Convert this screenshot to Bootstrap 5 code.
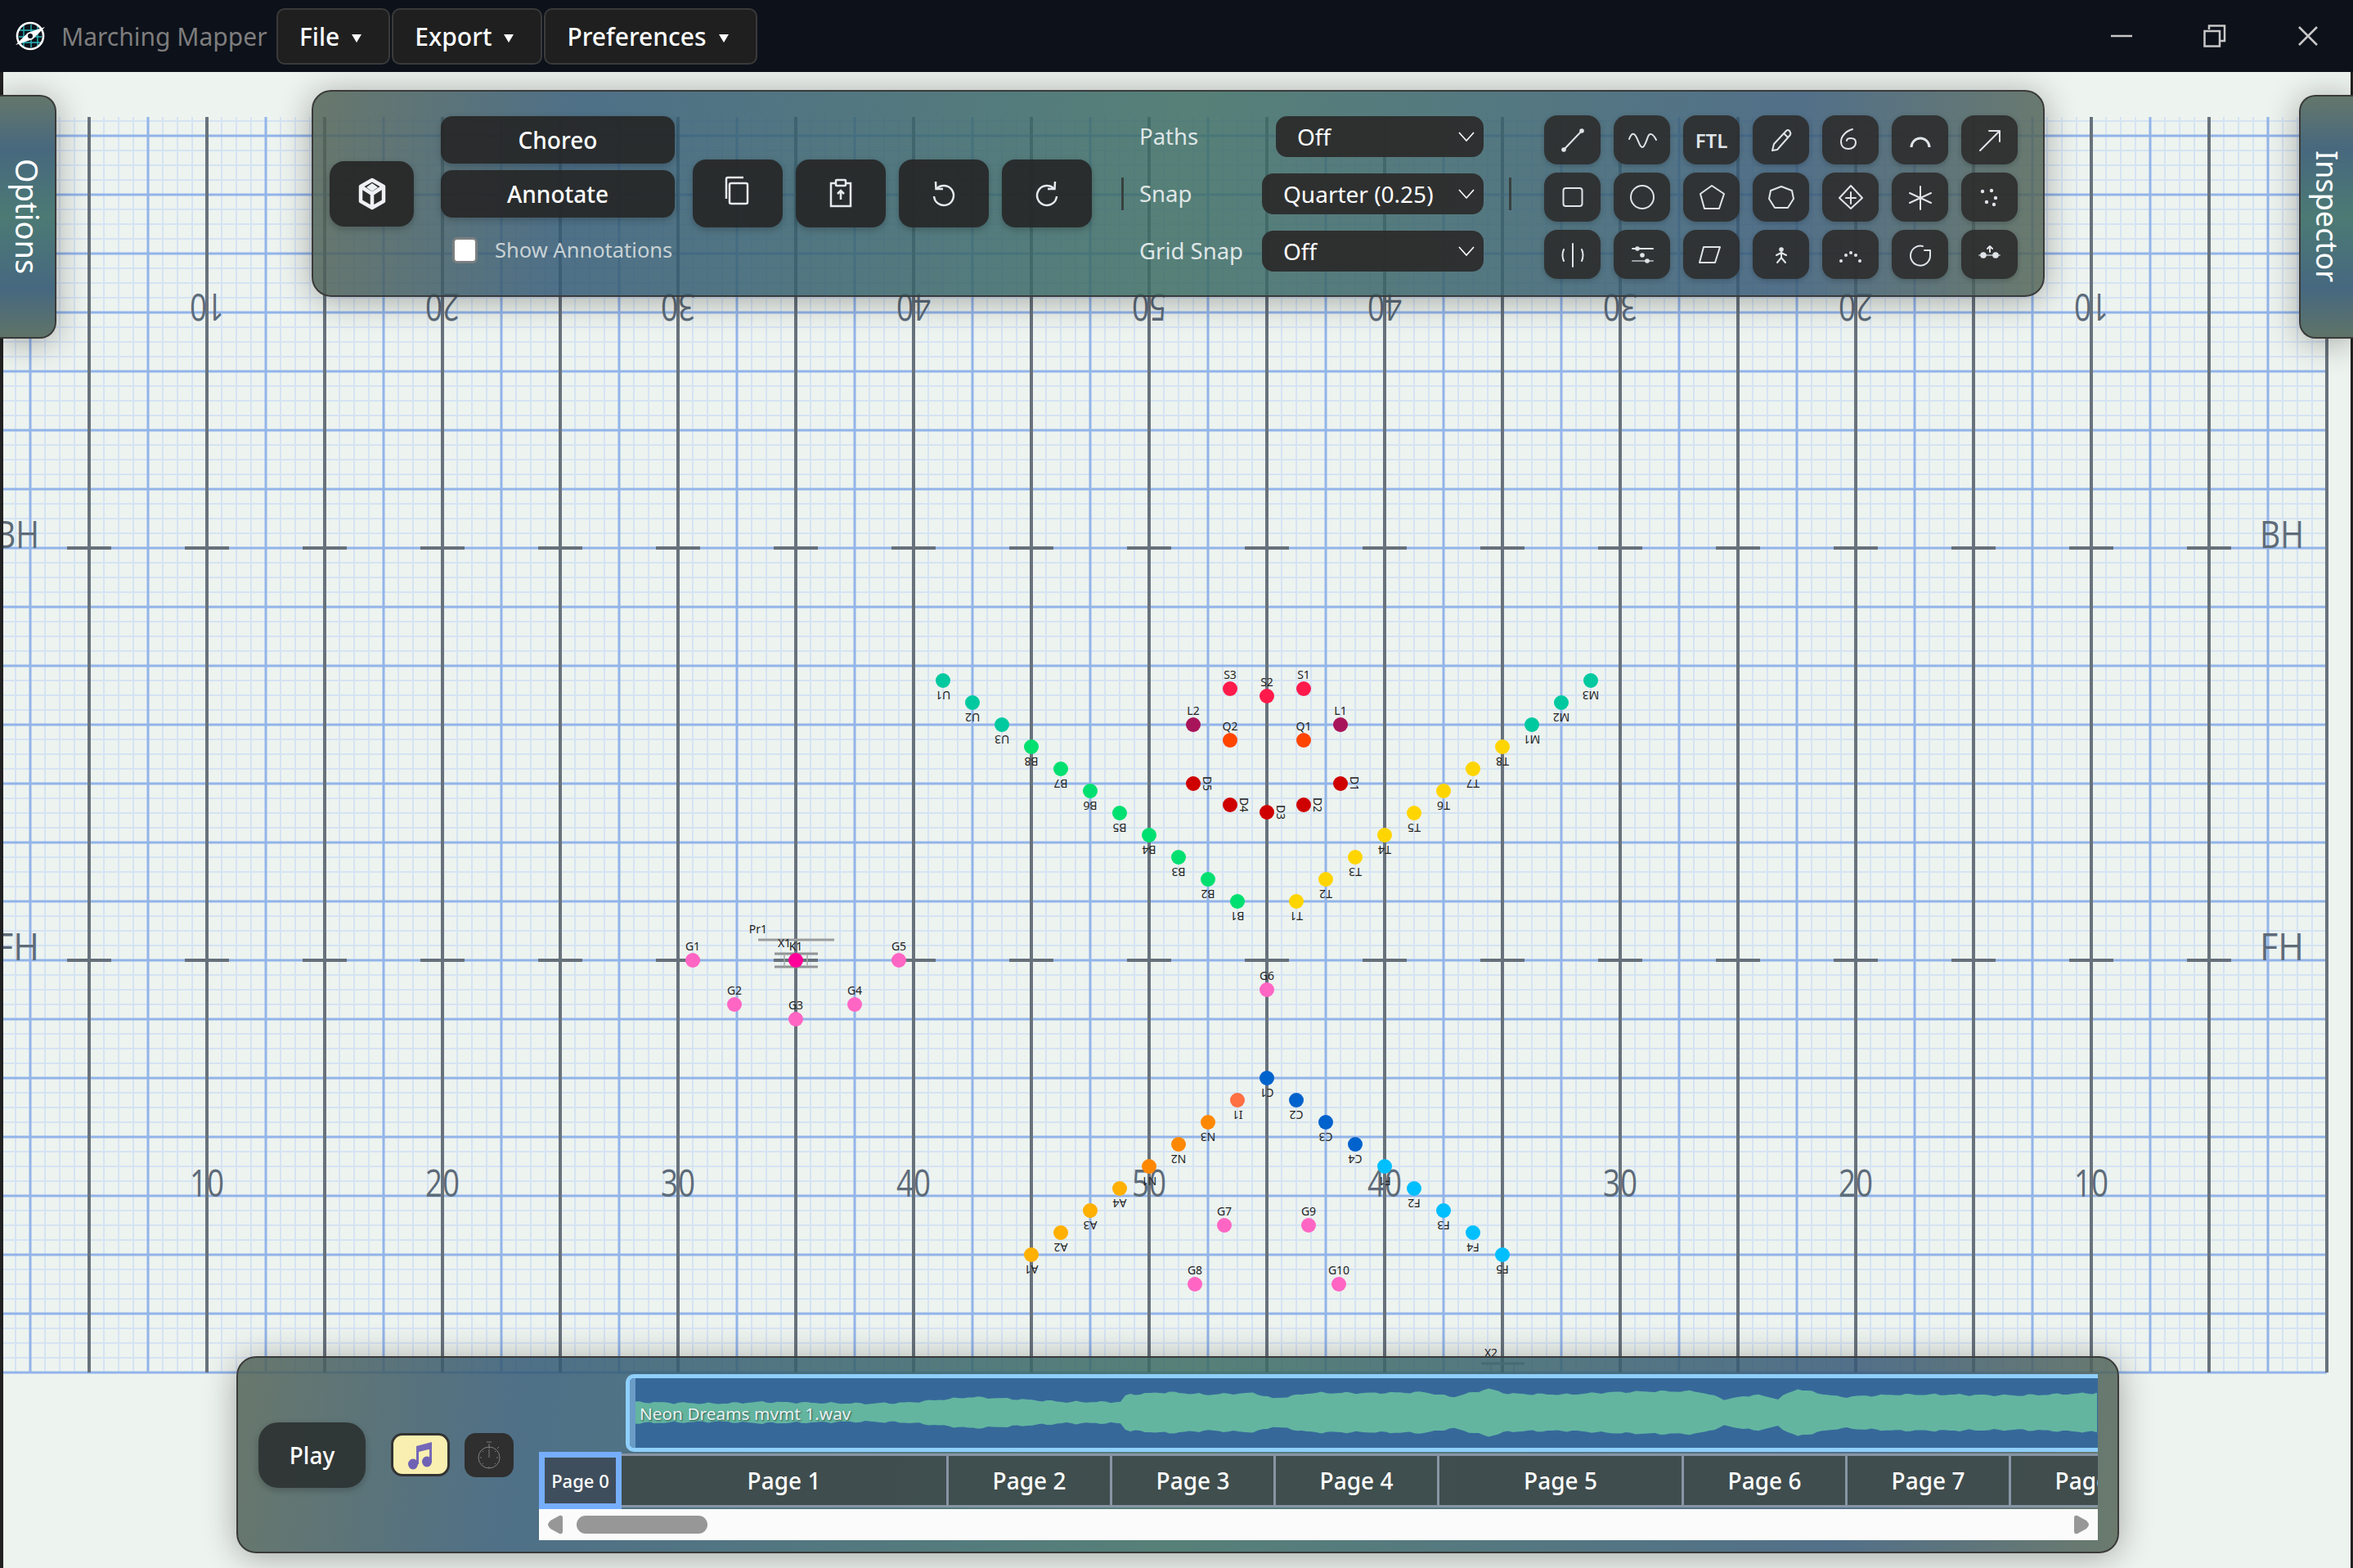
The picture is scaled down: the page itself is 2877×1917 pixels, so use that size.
<!DOCTYPE html>
<html lang="en">
<head>
  <meta charset="UTF-8">
  <meta name="viewport" content="width=device-width, initial-scale=1">
  <title>Marching Mapper</title>
  <link href="https://cdn.jsdelivr.net/npm/bootstrap@5.3.3/dist/css/bootstrap.min.css" rel="stylesheet">
  <style>
    html, body { height: 100%; }
    body {
      background: #edf3ef;
      font-family: "Noto Sans", "Open Sans", sans-serif;
      overflow: hidden;
    }

    /* title bar */
    .titlebar { height: 88px; background: #0d111a; }
    .logo-svg { width: 38px; height: 38px; margin-left: 18px; margin-right: 19px; flex-shrink: 0; }
    .app-name { color: #7d7d7d; font-size: 30px; width: 263px; white-space: nowrap; }
    .menu-btn {
      height: 69px;
      padding: 0 33px 0 26px;
      margin-right: 2px;
      color: #fff;
      font-size: 30px;
      font-weight: 500;
      background: #1f1f1f;
      border: 2px solid #3a3a3a;
      border-radius: 10px;
      --bs-btn-hover-color: #fff;
    }
    .menu-btn.dropdown-toggle::after {
      margin-left: 15px;
      vertical-align: 4px;
      border-top: 10px solid #fff;
      border-left: 6px solid transparent;
      border-right: 6px solid transparent;
      border-bottom: 0;
    }
    .win-svg { width: 36px; height: 36px; stroke: #c8c8c8; stroke-width: 2.5; fill: none; }
    .win-group { gap: 78px; margin-right: 37px; }

    /* field */
    .field-area { height: 1829px; position: relative; overflow: hidden; }
    .field-svg { position: absolute; left: 0; top: 0; width: 2877px; height: 1829px; }
    .edge-left, .edge-right { position: absolute; top: 0; bottom: 0; background: #222; }
    .edge-left { left: 0; width: 4px; }
    .edge-right { right: 0; width: 3px; }
    .yard-num { font-family: "Open Sans", "Noto Sans", sans-serif; font-weight: 400; font-size: 45px; fill: #5d6b79; }
    .dot-label { font-family: "Noto Sans", sans-serif; font-size: 14px; fill: #222; }

    /* floating panels */
    .glass-panel {
      position: absolute;
      border: 2px solid #3a3a3a;
      background: linear-gradient(97deg, rgba(81,98,85,.85) 0%, rgba(51,89,117,.85) 15%, rgba(60,108,99,.85) 50%, rgba(55,89,119,.85) 85%, rgba(84,101,86,.85) 100%);
      box-shadow: 0 4px 40px rgba(0,0,0,.32);
    }
    .toolbar-panel {
      left: 381px; top: 22px; width: 2119px; height: 253px;
      border-radius: 24px;
      padding-left: 20px;
    }
    .timeline-panel {
      left: 289px; top: 1570px; width: 2302px; height: 241px;
      border-radius: 24px;
      padding-left: 25px;
    }
    .side-tab {
      top: 28px; height: 298px;
      color: #fff;
      font-size: 36px;
      writing-mode: vertical-rl;
      background: linear-gradient(180deg, #64776c 0%, #47687e 22%, #4c7a74 50%, #466880 80%, #5f7468 100%);
    }
    .options-tab { left: 0; width: 69px; border-left: 0; border-radius: 0 20px 20px 0; font-size: 38px; }
    .inspector-tab { right: 0; width: 66px; border-right: 0; border-radius: 20px 0 0 20px; }

    .dark-btn {
      color: #fff;
      background: rgba(38,38,38,.92);
      border: 0;
      box-shadow: 0 3px 8px rgba(0,0,0,.22);
      --bs-btn-hover-color: #fff;
    }
    .cube-btn { width: 103px; height: 80px; border-radius: 18px; margin-right: 33px; }
    .mode-col { width: 286px; margin-right: 22px; margin-bottom: 6px; }
    .mode-btn { height: 58px; border-radius: 14px; font-size: 28px; font-weight: 500; padding: 0; }
    .mode-col .mode-btn + .mode-btn { margin-top: 8px; }
    .annot-row { margin-top: 20px; padding-left: 14px; gap: 21px; }
    .annot-check.form-check-input {
      width: 31px; height: 32px; margin: 0;
      border: 3px solid #7b7f80;
      border-radius: 6px;
      background-color: #fff;
      flex-shrink: 0;
    }
    .annot-label { color: #c9d2d4; font-size: 25.5px; white-space: nowrap; }
    .edit-group { gap: 16px; }
    .edit-btn { width: 110px; height: 83px; border-radius: 16px; padding: 0; }
    .edit-svg { width: 48px; height: 48px; fill: none; stroke: #e6eaee; stroke-width: 2.5; }
    .tb-sep { width: 3px; height: 40px; background: #37413f; flex-shrink: 0; }
    .sep-one { margin: 0 19px 0 36px; }
    .sep-two { margin: 0 40px 0 31px; }

    .snap-grid { display: grid; grid-template-columns: 150px 271px; row-gap: 20px; align-items: center; }
    .snap-label { color: #dfe6e6; font-size: 27.5px; white-space: nowrap; }
    .snap-select.form-select {
      height: 50px;
      width: 271px;
      padding: 0 40px 0 26px;
      color: #fff;
      font-size: 28px;
      line-height: 50px;
      background-color: rgba(44,44,44,.95);
      background-image: url("data:image/svg+xml,%3csvg xmlns='http://www.w3.org/2000/svg' viewBox='0 0 20 12'%3e%3cpath fill='none' stroke='%23fff' stroke-width='1.6' d='M1 1l9 10 9-10'/%3e%3c/svg%3e");
      background-position: right 11px center;
      background-size: 20px 12px;
      border: 0;
      border-radius: 14px;
    }
    .snap-select.first-sel { width: 254px; margin-left: 17px; padding-left: 26px; }

    .tool-grid { display: grid; grid-template-columns: repeat(7, 69px); grid-auto-rows: 60px; column-gap: 16px; row-gap: 10px; margin-top: 8px; }
    .tool-btn {
      padding: 0;
      border-radius: 16px;
      color: #dfe4e8;
      background: rgba(46,46,46,.92);
      border: 0;
      box-shadow: 0 2px 6px rgba(0,0,0,.2);
      display: flex; align-items: center; justify-content: center;
      --bs-btn-hover-color: #dfe4e8;
    }
    .tool-btn svg { width: 40px; height: 40px; fill: none; stroke: currentColor; stroke-width: 2; stroke-linecap: round; stroke-linejoin: round; }
    .tool-btn svg .solid { fill: currentColor; stroke: none; }
    .ftl-text { font-size: 24px; font-weight: 600; line-height: 1; margin-top: 2px; }

    /* timeline panel */
    .play-btn { width: 131px; height: 80px; border-radius: 24px; font-size: 28px; font-weight: 500; margin-right: 31px; background: rgba(44,50,50,.92); padding: 0; }
    .music-btn { width: 72px; height: 53px; padding: 0; border-radius: 14px; border: 3px solid #333; background: #f8efb0; margin-right: 18px; }
    .timer-btn { width: 60px; height: 54px; padding: 0; border-radius: 14px; border: 0; background: #2f2f2f; margin-right: 31px; }
    .timeline-wrap { width: 1906px; margin-top: 20px; align-self: flex-start; overflow: hidden; }
    .wave-box {
      position: relative;
      margin-left: 106px;
      height: 95px;
      border: 5px solid #8fd0ff;
      border-right: 0;
      border-radius: 10px 0 0 10px;
      background: #36699a;
      overflow: hidden;
    }
    .wave-svg { position: absolute; left: 0; top: 0; width: 100%; height: 100%; }
    .wave-grip { position: absolute; left: 0; top: 0; bottom: 0; width: 7px; background: #6a9cc6; border-radius: 4px 0 0 4px; }
    .wave-name { position: absolute; left: 12px; top: 29px; font-size: 20.8px; color: #e8f2f2; line-height: 28px; text-shadow: 1px 1px 2px rgba(0,0,0,.55); white-space: nowrap; }
    .page-row { display: flex; height: 70px; }
    .page-cell {
      flex-shrink: 0;
      width: 200px;
      margin: 2px 0;
      display: flex; align-items: center; justify-content: center;
      color: #fff;
      font-size: 28px;
      font-weight: 500;
      background: rgba(62,74,74,.92);
      border: 3px solid #8795a5;
      border-left-width: 0;
    }
    .page-cell.page-zero {
      width: 101px;
      margin: 0;
      font-size: 22px;
      background: #3f4e5c;
      border: 7px solid #76aefc;
    }
    .page-cell.page-one { width: 400px; }
    .page-cell.page-five { width: 299px; }
    .scroll-track { height: 38px; background: #fbfbfb; gap: 17px; padding: 0 11px; }
    .scroll-thumb { width: 160px; height: 22px; background: #979797; border-radius: 11px; }
    .scroll-arrow { width: 18px; height: 24px; fill: #979797; flex-shrink: 0; }
  </style>
</head>
<body>

<!-- title bar -->
<header class="titlebar d-flex align-items-center">
  <svg class="logo-svg" viewBox="-19 -19 38 38">
    <g stroke="#2bb8bd" stroke-width="1.4">
      <path d="M-8-14V14M1-14V14M9-14V14M-14-7H14M-14 1H14M-14 8H14"/>
    </g>
    <circle r="16" fill="none" stroke="#fff" stroke-width="2.6"/>
    <path d="M18-11L3 4-18 11-3-4Z" fill="#fff"/>
    <circle cx="0" cy="0" r="3" fill="#0d111a"/>
  </svg>
  <span class="app-name">Marching Mapper</span>
  <button class="btn menu-btn dropdown-toggle" type="button">File</button>
  <button class="btn menu-btn dropdown-toggle" type="button">Export</button>
  <button class="btn menu-btn dropdown-toggle" type="button">Preferences</button>
  <div class="d-flex align-items-center win-group ms-auto">
    <svg class="win-svg" viewBox="0 0 36 36"><path d="M5 18H31"/></svg>
    <svg class="win-svg" viewBox="0 0 36 36"><path d="M11 10V5.500H30V24H24M5.500 12H24V30.500H5.500Z"/></svg>
    <svg class="win-svg" viewBox="0 0 36 36"><path d="M7 7L29 29M29 7L7 29"/></svg>
  </div>
</header>

<main class="field-area">
  <svg class="field-svg" id="fieldSvg" viewBox="0 88 2877 1829"></svg>
  <div class="edge-left"></div>
  <div class="edge-right"></div>

  <div class="glass-panel side-tab options-tab d-flex align-items-center justify-content-center">Options</div>
  <div class="glass-panel side-tab inspector-tab d-flex align-items-center justify-content-center">Inspector</div>

  <!-- top toolbar -->
  <div class="glass-panel toolbar-panel d-flex align-items-center">
    <button class="btn dark-btn cube-btn d-flex align-items-center justify-content-center p-0" type="button" aria-label="3D view">
      <svg width="40" height="44" viewBox="-20 -22 40 44" fill="none" stroke="#eef1f4" stroke-width="4.500" stroke-linejoin="round">
        <path d="M0-17L14-9V9L0 17-14 9V-9Z"/>
        <path d="M-14-9L0 0 14-9M0 0V16"/>
        <path d="M0-13L7-8 0-3-7-8Z" fill="#eef1f4" stroke="none"/>
      </svg>
    </button>

    <div class="mode-col">
      <button class="btn dark-btn mode-btn w-100" type="button">Choreo</button>
      <button class="btn dark-btn mode-btn w-100" type="button">Annotate</button>
      <div class="d-flex align-items-center annot-row">
        <input class="form-check-input annot-check" type="checkbox" id="showAnnot">
        <label class="annot-label" for="showAnnot">Show Annotations</label>
      </div>
    </div>

    <div class="d-flex edit-group">
      <button class="btn dark-btn edit-btn d-flex align-items-center justify-content-center" type="button" aria-label="Copy">
        <svg class="edit-svg" viewBox="-24 -24 48 48"><rect x="-10" y="-13" width="22" height="25" rx="2"/><path d="M-14 6V-18Q-14-20-12-20H7"/></svg>
      </button>
      <button class="btn dark-btn edit-btn d-flex align-items-center justify-content-center" type="button" aria-label="Paste">
        <svg class="edit-svg" viewBox="-24 -24 48 48"><path d="M-6-13H-12V15H12V-13H6"/><rect x="-6" y="-17" width="12" height="7" rx="1"/><path d="M0 7V-4M-4 0L0-4 4 0"/></svg>
      </button>
      <button class="btn dark-btn edit-btn d-flex align-items-center justify-content-center" type="button" aria-label="Undo">
        <svg class="edit-svg" viewBox="-24 -24 48 48"><path d="M-9-6A12 12 0 1 1-12 3"/><path d="M-10-15L-9.500-6-1-6"/></svg>
      </button>
      <button class="btn dark-btn edit-btn d-flex align-items-center justify-content-center" type="button" aria-label="Redo">
        <svg class="edit-svg" viewBox="-24 -24 48 48"><path d="M9-6A12 12 0 1 0 12 3"/><path d="M10-15L9.500-6 1-6"/></svg>
      </button>
    </div>

    <div class="tb-sep sep-one"></div>

    <div class="snap-grid">
      <span class="snap-label">Paths</span>
      <select class="form-select snap-select first-sel"><option>Off</option></select>
      <span class="snap-label">Snap</span>
      <select class="form-select snap-select"><option>Quarter (0.25)</option></select>
      <span class="snap-label">Grid Snap</span>
      <select class="form-select snap-select"><option>Off</option></select>
    </div>

    <div class="tb-sep sep-two"></div>

    <div class="tool-grid">
      <button class="btn tool-btn" type="button"><svg viewBox="-20 -20 40 40"><path d="M-11 12L11-11"/><circle class="solid" cx="-11" cy="12" r="2.800"/><circle class="solid" cx="11" cy="-11" r="2.800"/></svg></button>
      <button class="btn tool-btn" type="button"><svg viewBox="-20 -20 40 40"><path d="M-16-1C-13-9-10-9-7-3S-3 9 0 9 5 1 7-4 13-8 17 0"/></svg></button>
      <button class="btn tool-btn" type="button"><span class="ftl-text">FTL</span></button>
      <button class="btn tool-btn" type="button"><svg viewBox="-20 -20 40 40"><path d="M-11 13L-9 5 6-11Q8-13 10-11L11-9Q12-7 10-5L-5 12ZM3-8L8-3"/></svg></button>
      <button class="btn tool-btn" type="button"><svg viewBox="-20 -20 40 40"><path d="M2-13C-6-11-12-4-12 2-12 8-8 11-3 11 2 11 6 8 6 3 6-1 3-2 0-2-3-2-5-1-5 1"/></svg></button>
      <button class="btn tool-btn" type="button"><svg viewBox="-20 -20 40 40"><path d="M-11 9A11 11 0 0 1 11 9" stroke-width="3" stroke-linecap="butt"/></svg></button>
      <button class="btn tool-btn" type="button"><svg viewBox="-20 -20 40 40"><path d="M-12 13L12-11M-1-11H12V2"/></svg></button>

      <button class="btn tool-btn" type="button"><svg viewBox="-20 -20 40 40"><rect x="-11.500" y="-11" width="23" height="22" rx="3"/></svg></button>
      <button class="btn tool-btn" type="button"><svg viewBox="-20 -20 40 40"><circle r="14"/></svg></button>
      <button class="btn tool-btn" type="button"><svg viewBox="-20 -20 40 40"><path d="M0-14L15-4 9 14H-9L-14-4Z"/></svg></button>
      <button class="btn tool-btn" type="button"><svg viewBox="-20 -20 40 40"><path d="M0-13L13-8 15 2 8 13H-8L-15 2-13-8Z"/></svg></button>
      <button class="btn tool-btn" type="button"><svg viewBox="-20 -20 40 40"><path d="M0-14L14 1 0 14-14 1ZM-6 1H6M0-6V8"/></svg></button>
      <button class="btn tool-btn" type="button"><svg viewBox="-20 -20 40 40"><path d="M0-13V15M-13-5L13 7M-13 7L13-5"/></svg></button>
      <button class="btn tool-btn" type="button"><svg viewBox="-20 -20 40 40"><g class="solid"><circle cx="-9" cy="-7" r="2.200"/><circle cx="2" cy="-8" r="2.200"/><circle cx="7" cy="1" r="2.200"/><circle cx="-4" cy="6" r="2.200"/><circle cx="5" cy="9" r="2.200"/></g></svg></button>

      <button class="btn tool-btn" type="button"><svg viewBox="-20 -20 40 40"><path d="M0-13V15M-11-6Q-14 1-11 8M11-6Q14 1 11 8"/></svg></button>
      <button class="btn tool-btn" type="button"><svg viewBox="-20 -20 40 40"><path d="M-12-7H13"/><path d="M-12 8H13" stroke="#9aa0a3"/><g class="solid"><circle cx="-6" cy="-7" r="2.800"/><circle cx="0" cy="1" r="2.800"/><circle cx="6" cy="8" r="2.800"/></g></svg></button>
      <button class="btn tool-btn" type="button"><svg viewBox="-20 -20 40 40"><path d="M-10-9H10L4 10H-15Z"/></svg></button>
      <button class="btn tool-btn" type="button"><svg viewBox="-20 -20 40 40"><circle class="solid" cx="0" cy="-6" r="2.800"/><path d="M0-3V5M-6 1L0-2 6 1M-5 10L0 4 5 10"/></svg></button>
      <button class="btn tool-btn" type="button"><svg viewBox="-20 -20 40 40"><g class="solid"><circle cx="-12" cy="8" r="2"/><circle cx="-6" cy="1" r="2"/><circle cx="0" cy="-2" r="2"/><circle cx="6" cy="1" r="2"/><circle cx="11" cy="8" r="2"/></g></svg></button>
      <button class="btn tool-btn" type="button"><svg viewBox="-20 -20 40 40"><path d="M3-10A12 12 0 1 0 12 2V-5H5"/></svg></button>
      <button class="btn tool-btn" type="button"><svg viewBox="-20 -20 40 40"><path d="M-13 1H12" stroke="#9aa0a3"/><path d="M0-3V-10M-3-7L0-10 3-7"/><g class="solid"><circle cx="-8" cy="1" r="3.800"/><circle cx="7" cy="1" r="3.800"/></g></svg></button>
    </div>
  </div>

  <!-- timeline -->
  <div class="glass-panel timeline-panel d-flex align-items-center">
    <button class="btn dark-btn play-btn" type="button">Play</button>
    <button class="btn music-btn d-flex align-items-center justify-content-center" type="button" aria-label="Music">
      <svg width="36" height="36" viewBox="-18 -18 36 36">
        <path d="M-5-11L14-16V-8L-2-4V11H-5ZM11-14H14V8H11Z" fill="#7568b8"/>
        <ellipse cx="-9" cy="11" rx="6" ry="6.500" fill="#6f62b4"/>
        <ellipse cx="8" cy="8" rx="6" ry="6.500" fill="#6f62b4"/>
      </svg>
    </button>
    <button class="btn timer-btn d-flex align-items-center justify-content-center" type="button" aria-label="Metronome timer">
      <svg width="36" height="40" viewBox="-18 -20 36 40" fill="none" stroke="#7f7f7f" stroke-width="1">
        <circle cx="0" cy="3" r="13"/>
        <path d="M0 3V-7M0-10V-14M-3-16H3M10-8L12-10M0-10V-8M0 14V16M-11 3H-9M9 3H11M-8-5L-7-4M8-5L7-4M-8 11L-7 10M8 11L7 10"/>
      </svg>
    </button>

    <div class="timeline-wrap">
      <div class="wave-box">
        <svg class="wave-svg" id="waveSvg" viewBox="0 0 1795 85" preserveAspectRatio="none"></svg>
        <div class="wave-grip"></div>
        <div class="wave-name">Neon Dreams mvmt 1.wav</div>
      </div>
      <div class="page-row">
        <div class="page-cell page-zero">Page 0</div>
        <div class="page-cell page-one">Page 1</div>
        <div class="page-cell">Page 2</div>
        <div class="page-cell">Page 3</div>
        <div class="page-cell">Page 4</div>
        <div class="page-cell page-five">Page 5</div>
        <div class="page-cell">Page 6</div>
        <div class="page-cell">Page 7</div>
        <div class="page-cell">Page 8</div>
      </div>
      <div class="scroll-track d-flex align-items-center">
        <svg class="scroll-arrow" viewBox="0 0 18 24"><path d="M0 12Q0 10 3 7L14 1Q18 0 18 4V20Q18 24 14 23L3 17Q0 14 0 12Z"/></svg>
        <div class="scroll-thumb"></div>
        <svg class="scroll-arrow ms-auto" viewBox="0 0 18 24"><path d="M18 12Q18 10 15 7L4 1Q0 0 0 4V20Q0 24 4 23L15 17Q18 14 18 12Z"/></svg>
      </div>
    </div>
  </div>
</main>

<script>
  // field drawing
  const NS = "http://www.w3.org/2000/svg";
  const field = document.getElementById("fieldSvg");
  const GRID_L = 4, GRID_R = 2845, GRID_T = 143, GRID_B = 1678;

  function el(parent, name, attrs, text) {
    const n = document.createElementNS(NS, name);
    for (const k in attrs) n.setAttribute(k, attrs[k]);
    if (text) n.textContent = text;
    parent.appendChild(n);
    return n;
  }
  function vline(x, color, w) { el(field, "line", { x1: x, x2: x, y1: GRID_T, y2: GRID_B, stroke: color, "stroke-width": w }); }
  function hline(y, color, w) { el(field, "line", { x1: GRID_L, x2: GRID_R, y1: y, y2: y, stroke: color, "stroke-width": w }); }

  // light lines every 18px, blue every 72/144, dark every 144
  for (let x = 19; x <= GRID_R; x += 18) vline(x, "#d5e3f3", 2);
  for (let y = 148; y <= GRID_B; y += 18) hline(y, "#d5e3f3", 2);
  for (let y = 166; y <= GRID_B; y += 72) hline(y, "#92b4e9", 3);
  for (let x = 37; x <= GRID_R; x += 144) vline(x, "#92b4e9", 3);
  for (let x = 109; x <= GRID_R; x += 144) vline(x, "#68727c", 4);

  // hash ticks
  for (let x = 109; x <= GRID_R - 100; x += 144) {
    for (const y of [670, 1174]) {
      el(field, "line", { x1: x - 27, x2: x + 27, y1: y, y2: y, stroke: "#66707a", "stroke-width": 4 });
    }
  }

  // yard numbers
  const yards = [[253, "10"], [541, "20"], [829, "30"], [1117, "40"], [1405, "50"], [1693, "40"], [1981, "30"], [2269, "20"], [2557, "10"]];
  yards.forEach(([x, t]) => {
    el(field, "text", { x, y: 1463, class: "yard-num", "text-anchor": "middle", textLength: 42, lengthAdjust: "spacingAndGlyphs" }, t);
    el(field, "text", { x, y: 391, class: "yard-num", "text-anchor": "middle", textLength: 42, lengthAdjust: "spacingAndGlyphs", transform: `rotate(180 ${x} 375)` }, t);
  });
  [[21, 670, "BH"], [2790, 670, "BH"], [21, 1174, "FH"], [2790, 1174, "FH"]].forEach(([x, y, t]) => {
    el(field, "text", { x, y, class: "yard-num", "text-anchor": "middle", textLength: 54, lengthAdjust: "spacingAndGlyphs" }, t);
  });

  // props
  function stand(cx, cy) {
    for (const dy of [-8, 8]) el(field, "line", { x1: cx - 26, x2: cx + 27, y1: cy + dy, y2: cy + dy, stroke: "#909496", "stroke-width": 3 });
    for (const dx of [-14, 14]) el(field, "line", { x1: cx + dx, x2: cx + dx, y1: cy - 8, y2: cy + 8, stroke: "#a3a7a9", "stroke-width": 1.5 });
  }
  stand(973, 1174);
  stand(1837, 1675);
  el(field, "line", { x1: 927, x2: 1020, y1: 1149, y2: 1149, stroke: "#9a9c9e", "stroke-width": 3 });

  // performers: t = label above, b = rotated label under the dot, r = sideways label
  const colors = { U: "#00c9a0", B: "#00e070", T: "#ffd500", M: "#00c9a0", S: "#ff1a4b", L: "#a8145a", Q: "#ff4500", D: "#cf0000", G: "#ff66c4", K: "#ff0099", C: "#0062cc", F: "#00bfff", N: "#ff8800", I: "#ff7043", A: "#ffb000" };
  const dots = [
    ["U1",1153,832,"b"],["U2",1189,859,"b"],["U3",1225,886,"b"],
    ["B8",1261,913,"b"],["B7",1297,940,"b"],["B6",1333,967,"b"],["B5",1369,994,"b"],["B4",1405,1021,"b"],["B3",1441,1048,"b"],["B2",1477,1075,"b"],["B1",1513,1102,"b"],
    ["T1",1585,1102,"b"],["T2",1621,1075,"b"],["T3",1657,1048,"b"],["T4",1693,1021,"b"],["T5",1729,994,"b"],["T6",1765,967,"b"],["T7",1801,940,"b"],["T8",1837,913,"b"],
    ["M1",1873,886,"b"],["M2",1909,859,"b"],["M3",1945,832,"b"],
    ["S3",1504,842,"t"],["S2",1549,851,"t"],["S1",1594,842,"t"],["L2",1459,886,"t"],["L1",1639,886,"t"],["Q2",1504,905,"t"],["Q1",1594,905,"t"],
    ["D5",1459,958,"r"],["D4",1504,984,"r"],["D3",1549,993,"r"],["D2",1594,984,"r"],["D1",1639,958,"r"],
    ["G1",847,1174,"t"],["G2",898,1228,"t"],["G3",973,1246,"t"],["G4",1045,1228,"t"],["G5",1099,1174,"t"],["K1",973,1174,"t"],
    ["G6",1549,1210,"t"],["G7",1497,1498,"t"],["G9",1600,1498,"t"],["G8",1461,1570,"t"],["G10",1637,1570,"t"],
    ["C1",1549,1318,"b"],["C2",1585,1345,"b"],["C3",1621,1372,"b"],["C4",1657,1399,"b"],
    ["F1",1693,1426,"b"],["F2",1729,1453,"b"],["F3",1765,1480,"b"],["F4",1801,1507,"b"],["F5",1837,1534,"b"],
    ["I1",1513,1345,"b"],["N3",1477,1372,"b"],["N2",1441,1399,"b"],["N1",1405,1426,"b"],
    ["A4",1369,1453,"b"],["A3",1333,1480,"b"],["A2",1297,1507,"b"],["A1",1261,1534,"b"]
  ];
  dots.forEach(([name, x, y, pos]) => {
    el(field, "circle", { cx: x, cy: y, r: 9, fill: colors[name[0]] });
    const a = { class: "dot-label", "text-anchor": "middle" };
    if (pos === "t") { a.x = x; a.y = y - 12; }
    else if (pos === "b") { a.x = x; a.y = y + 23; a.transform = `rotate(180 ${x} ${y + 18})`; }
    else { a.x = x + 17; a.y = y + 5; a.transform = `rotate(90 ${x + 17} ${y})`; }
    el(field, "text", a, name);
  });
  el(field, "text", { class: "dot-label", x: 959, y: 1158, "text-anchor": "middle" }, "X1");
  el(field, "text", { class: "dot-label", x: 927, y: 1141, "text-anchor": "middle" }, "Pr1");
  el(field, "text", { class: "dot-label", x: 1823, y: 1659, "text-anchor": "middle" }, "X2");

  // waveform envelope, [x in box, half height]
  const env = [[0,13],[105,11],[162,13],[290,11],[337,12],[417,19],[463,17],[532,13],[601,13],[607,22],[659,25],[705,22],[764,24],[787,17],[833,24],[914,24],[972,25],[1006,19],[1050,29],[1075,23],[1145,22],[1202,25],[1260,26],[1306,26],[1340,16],[1375,22],[1404,17],[1427,29],[1479,19],[1549,22],[1607,22],[1699,21],[1795,24]];
  function envAt(x) {
    for (let i = 1; i < env.length; i++) {
      if (x <= env[i][0]) {
        const t = (x - env[i - 1][0]) / (env[i][0] - env[i - 1][0]);
        return env[i - 1][1] + (env[i][1] - env[i - 1][1]) * t;
      }
    }
    return 24;
  }
  let waveTop = "", waveBot = "";
  for (let x = 0; x <= 1795; x += 6) {
    const h = envAt(x) + 0.9 * Math.sin(x * 0.21) + 0.5 * Math.sin(x * 0.67);
    waveTop += `L${x} ${(42 - h).toFixed(1)}`;
    waveBot = `L${x} ${(42 + h).toFixed(1)}` + waveBot;
  }
  el(document.getElementById("waveSvg"), "path", { d: "M0 42" + waveTop + waveBot + "Z", fill: "#63b5a0" });
</script>

<script src="https://cdn.jsdelivr.net/npm/bootstrap@5.3.3/dist/js/bootstrap.bundle.min.js"></script>
</body>
</html>
